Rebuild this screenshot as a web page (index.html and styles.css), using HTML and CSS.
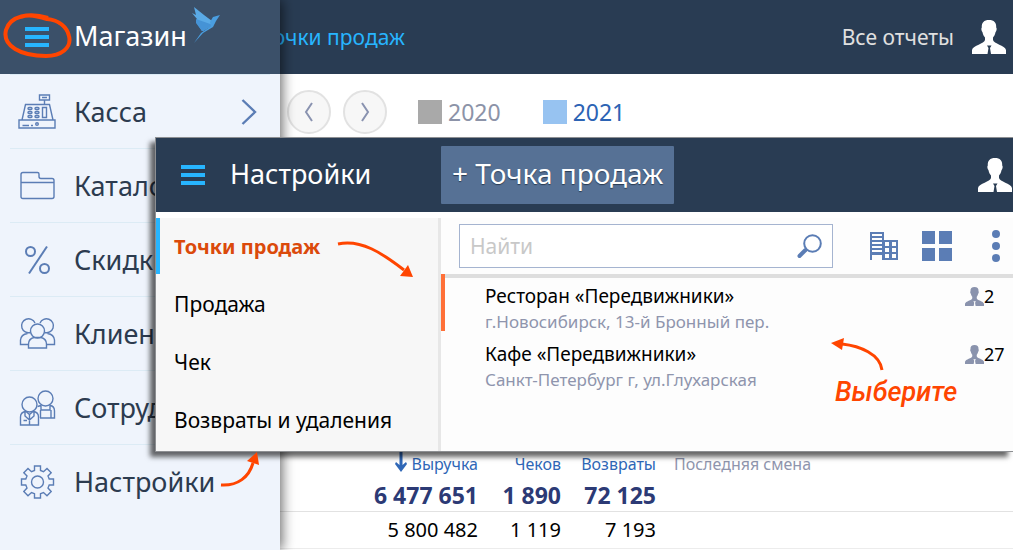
FILE: index.html
```html
<!DOCTYPE html>
<html lang="ru">
<head>
<meta charset="utf-8">
<meta name="viewport" content="width=device-width, initial-scale=1">
<title>Магазин — Настройки</title>
<link rel="stylesheet" href="styles.css">
</head>
<body>
<svg class="defs" width="0" height="0" aria-hidden="true">
  <symbol id="person" viewBox="0 0 34 34">
    <path d="M17 0C12 0 9.500 2.500 9.800 7.500C9 8 9.300 11 10.500 12.300C11 15 12 16.500 13 17.500V20C12.500 24 1 25 0 30V34H15.500L16.500 28L15 25.500H19.500L18 28L19 34H34V30C33 25 21.500 24 21 20V17.500C22 16.500 23 15 23.500 12.300C24.800 11 25 8 24.200 7.500C24.500 2.500 22 0 17 0Z" fill="currentColor"/>
  </symbol>
  <symbol id="burger" viewBox="0 0 24 20">
    <path d="M0 0H24V4H0ZM0 8H24V12H0ZM0 16H24V20H0Z" fill="currentColor"/>
  </symbol>
</svg>

<div class="app">
  <header class="topbar">
    <a class="crumb" href="#">Точки продаж</a>
    <a class="reports" href="#">Все отчеты</a>
    <button class="icon-btn" type="button" aria-label="Профиль"><svg width="34" height="34"><use href="#person"/></svg></button>
  </header>

  <main class="report">
    <div class="period">
      <button class="round" type="button" aria-label="Назад"><svg width="10" height="20" viewBox="0 0 10 20"><path d="M8 1L2 10L8 19"/></svg></button>
      <button class="round" type="button" aria-label="Вперёд"><svg width="10" height="20" viewBox="0 0 10 20"><path d="M2 1L8 10L2 19"/></svg></button>
      <span class="legend legend-prev"><i class="swatch"></i>2020</span>
      <span class="legend legend-cur"><i class="swatch"></i>2021</span>
    </div>
    <div class="chart"></div>
    <table class="totals">
      <thead>
        <tr>
          <th class="c1" scope="col"><svg class="sort" width="12" height="20" viewBox="0 0 12 20" aria-hidden="true"><path d="M4.500 0H7.500V13L11 10L12 12L6 20L0 12L1 10L4.500 13Z"/></svg>Выручка</th>
          <th class="c2" scope="col">Чеков</th>
          <th class="c3" scope="col">Возвраты</th>
          <th class="c4" scope="col">Последняя смена</th>
        </tr>
      </thead>
      <tbody>
        <tr class="sum"><td>6 477 651</td><td>1 890</td><td>72 125</td><td></td></tr>
        <tr class="row"><td>5 800 482</td><td>1 119</td><td>7 193</td><td></td></tr>
      </tbody>
    </table>
  </main>

  <aside class="drawer">
    <div class="drawer-head">
      <button class="icon-btn blue" type="button" aria-label="Меню"><svg width="24" height="20"><use href="#burger"/></svg></button>
      <span class="brand">Магазин</span>
      <svg class="bird" width="30" height="36" viewBox="0 0 30 36" aria-hidden="true">
        <path d="M3 0L13 8L21 14L22 18L12 24H11L5 15L6 12L1 6L5 8Z" fill="#5aaae6"/>
        <path d="M5 12L22 18L12 24H11L5 16Z" fill="#4593d6"/>
        <path d="M29 8L22 10L19 15L20 19L10 26L3 36L12 26L22 20L25 14Z" fill="#4a9ee0"/>
      </svg>
    </div>
    <nav class="menu">
      <a class="menu-item" href="#">
        <svg class="mi" width="38" height="36" viewBox="0 0 38 36"><path d="M1 26H37V34H1ZM4 26L7.500 10.500H31.500L35 26M21.500 1H31.500V6H21.500ZM24 3.500H29M26.500 6V10.500M24.500 13.500H28.500V23.500H24.500ZM4.500 31.500H11M13 31.500H15"/><g><rect x="10" y="13.500" width="4" height="2" rx="1"/><rect x="17" y="13.500" width="4" height="2" rx="1"/><rect x="10" y="17.500" width="4" height="2" rx="1"/><rect x="17" y="17.500" width="4" height="2" rx="1"/><rect x="10" y="21.500" width="4" height="2" rx="1"/><rect x="17" y="21.500" width="4" height="2" rx="1"/><circle cx="19" cy="30" r="1.300"/></g></svg>
        <span>Касса</span>
        <svg class="go" width="16" height="26" viewBox="0 0 16 26"><path d="M1.500 1L14 13L1.500 25"/></svg>
      </a>
      <a class="menu-item" href="#">
        <svg class="mi" width="38" height="36" viewBox="0 0 38 36"><path d="M3 29V6.500Q3 4.500 5 4.500H19.500Q21 4.500 21 6V8.500Q21 10.500 23 10.500H34Q36 10.500 36 12.500V28.500Q36 30.500 34 30.500H5Q3 30.500 3 28.500M3 14.500H36"/></svg>
        <span>Каталог</span>
      </a>
      <a class="menu-item" href="#">
        <svg class="mi thick" width="38" height="36" viewBox="0 0 38 36"><path d="M29 4.500L11 31.500"/><circle cx="12.500" cy="9.500" r="4.500"/><circle cx="26.500" cy="26.500" r="4.500"/></svg>
        <span>Скидки</span>
      </a>
      <a class="menu-item" href="#">
        <svg class="mi" width="38" height="36" viewBox="0 0 38 36"><circle cx="19.500" cy="15" r="7"/><path d="M10.500 32V28Q10.500 23 16 21.500H23Q28.500 23 28.500 28V32ZM12.500 16.500A7 7 0 1 1 17 7M22 7A7 7 0 1 1 26.500 16.500M9.500 17.500Q3 18.500 2.500 24V28.500H10M29.500 17.500Q36 18.500 36.500 24V28.500H29"/></svg>
        <span>Клиенты</span>
      </a>
      <a class="menu-item" href="#">
        <svg class="mi" width="38" height="36" viewBox="0 0 38 36"><circle cx="11.500" cy="14.500" r="7.500"/><circle cx="27.500" cy="8.500" r="7.500"/><path d="M2.500 35V27Q2.500 22 8 21.500L11.500 24.500L15 21.500Q20.500 22 20.500 27V35ZM7 22V26L11.500 30L16 26V22M11.500 25V35M5.500 30.500H9M22 28H36.500V21Q36.500 16 32 15.500V20H23V15.500L19.500 16.500M22.500 28V20M33 28V20"/></svg>
        <span>Сотрудники</span>
      </a>
      <a class="menu-item" href="#">
        <svg class="mi" width="38" height="36" viewBox="0 0 38 36"><circle cx="19.500" cy="18" r="6"/><path d="M16.500 2H22.500V6.500L25.500 7.700L29 4.500L33.200 8.700L30 12L31.200 15H35.500V21H31.200L30 24L33.200 27.500L29 31.700L25.500 28.500L22.500 29.700V34H16.500V29.700L13.500 28.500L10 31.700L5.800 27.500L9 24L7.800 21H3.500V15H7.800L9 12L5.800 8.700L10 4.500L13.500 7.700L16.500 6.500Z"/></svg>
        <span>Настройки</span>
      </a>
    </nav>
  </aside>

  <section class="window">
    <header class="win-head">
      <button class="icon-btn blue" type="button" aria-label="Меню"><svg width="24" height="20"><use href="#burger"/></svg></button>
      <h1 class="win-title">Настройки</h1>
      <button class="add" type="button">+ Точка продаж</button>
      <button class="icon-btn end" type="button" aria-label="Профиль"><svg width="34" height="34"><use href="#person"/></svg></button>
    </header>
    <div class="win-body">
      <nav class="tabs">
        <a class="tab active" href="#">Точки продаж</a>
        <a class="tab" href="#">Продажа</a>
        <a class="tab" href="#">Чек</a>
        <a class="tab" href="#">Возвраты и удаления</a>
      </nav>
      <div class="places">
        <div class="tools">
          <form class="search">
            <input class="search-input" type="text" placeholder="Найти" aria-label="Найти">
            <button class="icon-btn" type="button" aria-label="Искать"><svg width="25" height="25" viewBox="0 0 25 25"><circle cx="15.500" cy="9.500" r="8.300" fill="none" stroke="#5b7db5" stroke-width="2"/><path d="M8.500 16L2.500 22" stroke="#5b7db5" stroke-width="4" stroke-linecap="round"/></svg></button>
          </form>
          <button class="icon-btn steel" type="button" aria-label="Здания"><svg width="28" height="28" viewBox="0 0 28 28"><path fill="currentColor" fill-rule="evenodd" d="M0 0H14V8H28V28H0ZM2 2V4H12V2ZM2 6V8H12V6ZM2 10V12H12V10ZM2 14V16H12V14ZM2 18V20H12V18ZM2 23V28H12V23ZM15 10V14H19V10ZM22 10V14H26V10ZM15 16V20H19V16ZM22 16V20H26V16ZM15 22V26H19V22ZM22 22V26H26V22Z"/></svg></button>
          <button class="icon-btn steel" type="button" aria-label="Плитка"><svg width="30" height="30" viewBox="0 0 30 30"><path fill="currentColor" d="M0 0H13V13H0ZM17 0H30V13H17ZM0 17H13V30H0ZM17 17H30V30H17Z"/></svg></button>
          <button class="icon-btn steel more" type="button" aria-label="Ещё"><svg width="8" height="32" viewBox="0 0 8 32"><path fill="currentColor" d="M4 0A4 4 0 1 1 4 8A4 4 0 1 1 4 0M4 12A4 4 0 1 1 4 20A4 4 0 1 1 4 12M4 24A4 4 0 1 1 4 32A4 4 0 1 1 4 24"/></svg></button>
        </div>
        <ul class="list">
          <li class="place current">
            <div><div class="name">Ресторан «Передвижники»</div><div class="addr">г.Новосибирск, 13-й Бронный пер.</div></div>
            <span class="count"><svg width="19" height="19"><use href="#person"/></svg>2</span>
          </li>
          <li class="place">
            <div><div class="name">Кафе «Передвижники»</div><div class="addr">Санкт-Петербург г, ул.Глухарская</div></div>
            <span class="count"><svg width="19" height="19"><use href="#person"/></svg>27</span>
          </li>
        </ul>
      </div>
    </div>
  </section>

  <svg class="note note-ring" width="70" height="48" viewBox="0 0 70 48" aria-hidden="true"><path d="M45 6C26 0 7 4 3 18C-1 34 18 44 43 44C58 44 69 36 66 24C64 15 56 8 44 7C32 3 24 2 18 5"/><path class="thin" d="M54 11C60 14 63 18 65 24"/></svg>
  <svg class="note note-a" width="78" height="40" viewBox="0 0 78 40" aria-hidden="true"><path d="M1 5C24 0 45 14 67 31"/><path class="tip" d="M76 38L63 37L71 26Z"/></svg>
  <svg class="note note-b" width="40" height="38" viewBox="0 0 40 38" aria-hidden="true"><path d="M1 34C18 35 29 26 33 12"/><path class="tip" d="M37 1L39 14L27 10Z"/></svg>
  <svg class="note note-c" width="54" height="34" viewBox="0 0 54 34" aria-hidden="true"><path d="M12 6C30 8 50 16 52 32"/><path class="tip" d="M1 5L14 0L12 12Z"/></svg>
  <span class="note note-text">Выберите</span>
</div>
</body>
</html>
```
FILE: styles.css
```css
* { box-sizing: border-box; }

body {
  margin: 0;
  background: #fff;
  color: #000;
  font-family: "Noto Sans", "Open Sans", sans-serif;
  font-size: 20px;
}

a { color: inherit; text-decoration: none; }
button { font: inherit; cursor: pointer; }

.defs { position: absolute; }

.app {
  position: relative;
  min-height: 100vh;
  overflow: hidden;
}

.icon-btn {
  display: flex;
  padding: 0;
  border: 0;
  background: none;
  color: #fff;
}
.blue { color: #27b5ff; }
.steel { color: #5b7db5; }

/* Report page */
.topbar {
  display: flex;
  align-items: center;
  height: 74px;
  padding: 0 7px 0 262px;
  background: #293c53;
}
.crumb { color: #27b5ff; font-size: 21px; }
.reports { margin-left: auto; margin-right: 18px; color: #e0e0e0; font-size: 21px; }

.period {
  display: flex;
  align-items: center;
  padding: 16px 0 0 287px;
}
.round {
  display: grid;
  place-items: center;
  width: 44px;
  height: 44px;
  margin-right: 12px;
  border: 2px solid #e2e2e2;
  border-radius: 50%;
  background: #f7f7f7;
}
.round path { fill: none; stroke: #8a93b0; stroke-width: 2; }
.legend { display: flex; align-items: center; gap: 6px; font-size: 23px; }
.swatch { width: 24px; height: 24px; }
.legend-prev { margin-left: 19px; color: #8c93a8; }
.legend-prev .swatch { background: #a9a9a9; }
.legend-cur { margin-left: 42px; color: #2c63b4; }
.legend-cur .swatch { background: #97c3f1; }
.chart { height: 317px; }

.totals {
  width: 100%;
  border-collapse: collapse;
  table-layout: fixed;
}
.totals th { height: 27px; padding: 0 0 1px; color: #2f67b7; font-size: 16px; font-weight: 400; line-height: 24px; text-align: right; }
.totals td { padding: 0; text-align: right; }
.totals .c1 { width: 478px; }
.totals .c2 { width: 83px; }
.totals .c3 { width: 95px; }
.totals .c4 { padding-left: 18px; color: #8f95ad; text-align: left; }
.sort { margin-right: 5px; fill: #2f67b7; vertical-align: -2px; }
.sum td { height: 33px; padding-top: 2px; border-bottom: 1px solid #e2e2e2; color: #2c3a75; font-size: 23px; font-weight: 700; line-height: 30px; }
.row td { height: 37px; border-bottom: 1px solid #ececec; font-size: 20px; line-height: 30px; }

/* Side menu */
.drawer {
  position: absolute;
  top: 0;
  bottom: 0;
  left: 0;
  width: 280px;
  background: #eff4fc;
  box-shadow: 2px 0 12px rgba(0, 0, 0, .6);
}
.drawer-head {
  display: flex;
  align-items: center;
  height: 74px;
  padding-left: 25px;
  background: #3b5069;
  color: #fff;
}
.brand { margin: 0 4px 4px 25px; font-size: 27px; }
.bird { margin-bottom: 24px; }
.menu { padding: 0 10px; }
.menu-item {
  display: flex;
  align-items: center;
  height: 74px;
  padding: 0 13px 0 8px;
  border-top: 1px solid #dcebf5;
  color: #2c3b4f;
  font-size: 27px;
}
.mi { margin-right: 18px; fill: none; stroke: #5b7db5; stroke-width: 1.4; }
.mi.thick { stroke-width: 2; }
.go { margin-left: auto; fill: none; stroke: #5b7db5; stroke-width: 2.4; }

/* Settings window */
.window {
  position: absolute;
  top: 137px;
  left: 155px;
  right: 0;
  display: flex;
  flex-direction: column;
  min-height: 315px;
  border: 1px solid #8d8f92;
  border-right: 0;
  background: #fdfdfd;
  box-shadow: -5px 5px 5px rgba(0, 0, 0, .6);
}
.win-head {
  display: flex;
  align-items: center;
  height: 74px;
  padding: 0 1px 0 25px;
  background: #293c53;
  color: #fff;
}
.win-title { width: 211px; margin: 0 0 0 25px; padding-bottom: 4px; font-size: 27px; font-weight: 400; }
.add {
  height: 58px;
  padding: 0 11px 4px;
  border: 0;
  border-radius: 1px;
  background: #567195;
  color: #fff;
  font-size: 28px;
  text-shadow: 0 1px 1px #293c53;
}
.end { margin-left: auto; }
.win-body { display: flex; flex: 1; padding-top: 6px; background: #fff; }
.tabs {
  flex: none;
  width: 285px;
  border-right: 3px solid #e7e7e7;
  background: #f7f7f7;
}
.tab {
  display: flex;
  align-items: center;
  height: 56px;
  margin-bottom: 2px;
  padding-left: 18px;
  font-size: 21px;
}
.tab.active {
  padding-left: 14px;
  border-left: 4px solid #27b5ff;
  color: #db4a0b;
  font-size: 20px;
  font-weight: 700;
}
.tab:last-child { margin-bottom: 0; }
.places { flex: 1; min-width: 0; background: #fdfdfd; }
.tools {
  display: flex;
  align-items: center;
  gap: 24px;
  padding: 6px 13px 6px 18px;
}
.more { margin-left: 16px; }
.search {
  display: flex;
  align-items: center;
  flex: 1;
  min-width: 0;
  height: 44px;
  margin-right: 13px;
  padding: 0 10px;
  border: 1px solid #a5b4d0;
  background: #fff;
}
.search-input { flex: 1; min-width: 0; padding: 0; border: 0; outline: 0; background: none; font: inherit; font-size: 21px; }
.search-input::placeholder { color: #c8c8c8; opacity: 1; }
.list { margin: 0; padding: 0; border-top: 4px solid #dedede; list-style: none; }
.place {
  display: flex;
  justify-content: space-between;
  align-items: flex-start;
  padding: 8px 8px 0 44px;
}
.current {
  height: 57px;
  margin: -4px 0 1px;
  padding-left: 40px;
  border-left: 4px solid #ff7038;
}
.name { font-size: 19px; line-height: 28px; }
.addr { color: #8f95ad; font-size: 17px; line-height: 24px; }
.count { display: flex; align-items: center; width: 40px; font-size: 18px; line-height: 28px; }
.count svg { flex: none; color: #8a93ad; }

/* Hand-drawn hints */
.note { position: absolute; fill: none; stroke: #ff4500; stroke-width: 3; }
.note .tip { fill: #ff4500; stroke: none; }
.note .thin { stroke-width: 1; }
.note-ring { top: 12px; left: 3px; stroke-width: 4; }
.note-a { top: 239px; left: 337px; }
.note-b { top: 451px; left: 220px; }
.note-c { top: 338px; left: 830px; }
.note-text {
  top: 376px;
  left: 835px;
  color: #ff4500;
  font-family: Roboto, sans-serif;
  font-size: 27px;
  font-style: italic;
  font-weight: 500;
}
```
